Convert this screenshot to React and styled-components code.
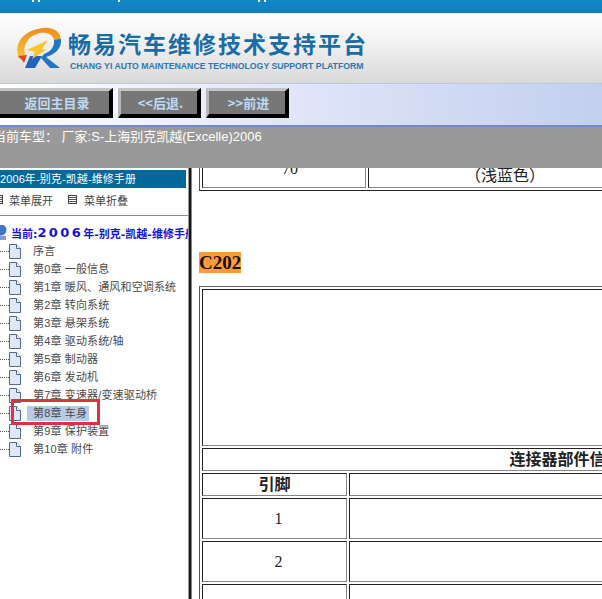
import React from "react";
import styled, { createGlobalStyle } from "styled-components";

const Global = createGlobalStyle`
  html, body { margin: 0; padding: 0; background: #fff; }
  body { font-family: "Liberation Sans", "Noto Sans CJK SC", sans-serif; text-spacing-trim: space-all; }
`;

const Page = styled.div`
  width: 602px;
  height: 599px;
  overflow: hidden;
  display: flex;
  flex-direction: column;
`;

const TopBar = styled.div`
  height: 13px;
  flex: none;
  display: flex;
  align-items: flex-start;
  background: linear-gradient(#1289c8, #127cb9);
`;

const Tick = styled.span`
  width: 2px;
  height: 2px;
  flex: none;
  margin-left: ${(p) => p.$gap}px;
  background: #e8f6ff;
`;

const Header = styled.header`
  height: 70px;
  flex: none;
  display: flex;
  align-items: flex-start;
  padding: 15px 0 0 16px;
  box-sizing: border-box;
  background: linear-gradient(#ffffff, #f4f4f4 35%, #d9d9d9);
`;

const Brand = styled.div`
  margin: 0 0 0 6px;
  display: flex;
  flex-direction: column;
`;

const BrandTitle = styled.div`
  font-family: "Noto Sans CJK SC", sans-serif;
  font-weight: 700;
  font-size: 23px;
  line-height: 30px;
  letter-spacing: 2px;
  color: #1a6ca6;
  white-space: nowrap;
`;

const BrandSub = styled.div`
  font-size: 8.7px;
  font-weight: 700;
  line-height: 11px;
  margin: 3px 0 0 2px;
  color: #2a78b2;
  white-space: nowrap;
`;

const Nav = styled.nav`
  height: 44px;
  flex: none;
  box-sizing: border-box;
  display: flex;
  gap: 5px;
  padding-top: 4px;
  margin-left: -4px;
  background: linear-gradient(90deg, #ffffff, #e0e5f9 50%, #c2cfee);
  border-top: 1px solid #bcc3dc;
  border-bottom: 2px solid #7189cd;
`;

const NavButton = styled.button`
  width: ${(p) => p.$w}px;
  height: 30px;
  box-sizing: border-box;
  border-style: solid;
  border-width: 3px 4px 4px 3px;
  border-color: #c4c4c4 #000 #000 #b8b8b8;
  background: #777;
  color: #bcdaf4;
  font-family: "Noto Sans CJK SC", sans-serif;
  font-size: 13px;
  font-weight: 700;
  padding: 0 0 0 ${(p) => p.$pad || 0}px;
`;

const InfoBar = styled.div`
  height: 41px;
  flex: none;
  box-sizing: border-box;
  background: #999;
  color: #fff;
  font-size: 13px;
  line-height: 18px;
  padding-top: 1px;
  white-space: nowrap;
  overflow: hidden;
`;

const InfoText = styled.div`
  margin-left: -7px;
`;

const Body = styled.div`
  flex: 1;
  min-height: 0;
  display: flex;
`;

const Side = styled.aside`
  position: relative;
  width: 188px;
  flex: none;
  overflow: hidden;
  padding-top: 2px;
  box-sizing: border-box;
`;

const SideTitle = styled.div`
  width: 186px;
  height: 18px;
  background: #03689c;
  color: #fff;
  font-size: 11px;
  letter-spacing: 0.1px;
  line-height: 18px;
  white-space: nowrap;
`;

const ToolRow = styled.div`
  height: 28px;
  box-sizing: border-box;
  padding-bottom: 4px;
  border-bottom: 1px solid #8a8a8a;
  display: flex;
  align-items: center;
  font-size: 11px;
  color: #444;
`;

const ToolIcon = styled.span`
  width: 9px;
  height: 9px;
  flex: none;
  box-sizing: border-box;
  border: 1px solid #444;
  margin-left: ${(p) => p.$ml}px;
  background: repeating-linear-gradient(#fff 0 1px, #555 1px 2px);
`;

const ToolLabel = styled.span`
  margin-left: ${(p) => p.$ml}px;
  white-space: nowrap;
`;

const Current = styled.div`
  display: flex;
  align-items: center;
  height: 19px;
  margin-top: 7px;
  white-space: nowrap;
  font-family: "DejaVu Sans", "Noto Sans CJK SC", sans-serif;
  font-weight: 700;
  font-size: 11px;
  color: #1414d8;
`;

const WideDigits = styled.span`
  font-size: 13px;
  letter-spacing: 2.4px;
`;

const Tree = styled.ul`
  list-style: none;
  margin: 0;
  padding: 0;
`;

const Item = styled.li`
  height: 18px;
  display: flex;
  align-items: center;
  font-size: 11px;
  letter-spacing: 0.15px;
  color: #4a4a4a;
  white-space: nowrap;
`;

const Dots = styled.span`
  width: 9px;
  flex: none;
  border-top: 1px dotted #555;
`;

const ItemLabel = styled.span`
  margin-left: 6px;
  padding: 0 2px 0 6px;
  line-height: 15px;
  background: ${(p) => (p.$on ? "#b9c9e6" : "transparent")};
`;

const Mark = styled.div`
  position: absolute;
  left: 11px;
  top: 231px;
  width: 89px;
  height: 26px;
  box-sizing: border-box;
  border: 3px solid #e2303f;
`;

const Divider = styled.div`
  width: 4px;
  flex: none;
  box-sizing: border-box;
  background: #161616;
  border-left: 1px solid #999;
  border-right: 1px solid #888;
`;

const Content = styled.main`
  flex: 1;
  min-width: 0;
  overflow: hidden;
  padding-left: 7px;
`;

const Table = styled.table`
  width: 733px;
  table-layout: fixed;
  border-collapse: separate;
  border-spacing: 2px;
  border-style: solid;
  border-width: 1px;
  border-color: #666 #222 #222 #555;
  margin: ${(p) => p.$m};
  font-family: "Liberation Serif", "Noto Sans CJK SC", serif;
  color: #222;
`;

const Col = styled.col`
  width: ${(p) => (p.$w ? `${p.$w}px` : "auto")};
`;

const Cell = styled.td`
  box-sizing: border-box;
  height: ${(p) => p.$h}px;
  border-style: solid;
  border-width: 1px;
  border-color: #222 #888 #888 #222;
  padding: ${(p) => p.$pad || 0};
  text-align: center;
  font-size: 16px;
  line-height: 16px;
  font-weight: ${(p) => (p.$b ? 700 : 400)};
  vertical-align: middle;
  white-space: nowrap;
`;

const Tag = styled.div`
  width: fit-content;
  margin-top: 61px;
  height: 21px;
  line-height: 21px;
  background: #fe9a37;
  color: #111;
  font-family: "Liberation Serif", serif;
  font-weight: 700;
  font-size: 19px;
`;

function Logo() {
  return (
    <svg width="46" height="42" viewBox="0 0 46 42" style={{ flex: "none", marginTop: -1 }}>
      <defs>
        <linearGradient id="ring" x1="0" y1="0" x2="0" y2="1">
          <stop offset="0" stopColor="#f28c1c" />
          <stop offset="1" stopColor="#f7c62c" />
        </linearGradient>
      </defs>
      <path d="M3 32C-3 16 8 3 27 1c11-1 18 4 18 13l-7-1c-1-6-8-8-14-7C13 8 6 18 9 28z" fill="url(#ring)" />
      <path d="M45 12c1 10-7 16-15 18l14 11H34L25 31l3-4c6-2 11-7 10-14z" fill="#1d77c4" />
      <path d="M14 29h12l-7 12H9z" fill="#2463bd" />
      <path d="M11 23l21-10-6 9 4 1-14 9 3-7z" fill="#f7c52c" />
      <path d="M2 29l9-1-3 8-2-3z" fill="#e0452a" />
    </svg>
  );
}

function PageIcon() {
  return (
    <svg width="12" height="15" viewBox="0 0 12 15" style={{ flex: "none" }}>
      <path d="M.5.5h7l4 4v10H.5z" fill="#dfe8fa" stroke="#4e6a9a" />
      <path d="M7.5.5v4h4" fill="#fff" stroke="#4e6a9a" />
    </svg>
  );
}

function PcIcon() {
  return (
    <svg width="8" height="15" viewBox="0 0 8 15" style={{ flex: "none", marginRight: 3 }}>
      <circle cx="1" cy="5" r="5.5" fill="#3f74c8" />
      <path d="M-4 11h10v4H-4z" fill="#7f9bd0" />
    </svg>
  );
}

const chapters = [
  "序言",
  "第0章 一般信息",
  "第1章 暖风、通风和空调系统",
  "第2章 转向系统",
  "第3章 悬架系统",
  "第4章 驱动系统/轴",
  "第5章 制动器",
  "第6章 发动机",
  "第7章 变速器/变速驱动桥",
  "第8章 车身",
  "第9章 保护装置",
  "第10章 附件",
];

export default function App() {
  return (
    <Page>
      <Global />
      <TopBar>
        <Tick $gap={32} />
        <Tick $gap={4} />
        <Tick $gap={78} />
        <Tick $gap={138} />
        <Tick $gap={4} />
      </TopBar>
      <Header>
        <Logo />
        <Brand>
          <BrandTitle>畅易汽车维修技术支持平台</BrandTitle>
          <BrandSub>CHANG YI AUTO MAINTENANCE TECHNOLOGY SUPPORT PLATFORM</BrandSub>
        </Brand>
      </Header>
      <Nav>
        <NavButton $w={117} $pad={6}>返回主目录</NavButton>
        <NavButton $w={83} $pad={3}>&lt;&lt;后退.</NavButton>
        <NavButton $w={83} $pad={3}>&gt;&gt;前进</NavButton>
      </Nav>
      <InfoBar>
        <InfoText>当前车型： 厂家:S-上海别克凯越(Excelle)2006</InfoText>
      </InfoBar>
      <Body>
        <Side>
          <SideTitle>2006年-别克-凯越-维修手册</SideTitle>
          <ToolRow>
            <ToolIcon $ml={-6} />
            <ToolLabel $ml={6}>菜单展开</ToolLabel>
            <ToolIcon $ml={15} />
            <ToolLabel $ml={7}>菜单折叠</ToolLabel>
          </ToolRow>
          <Current>
            <PcIcon />
            当前:<WideDigits>2006</WideDigits>年-别克-凯越-维修手册
          </Current>
          <Tree>
            {chapters.map((c) => (
              <Item key={c}>
                <Dots />
                <PageIcon />
                <ItemLabel $on={c.startsWith("第8章")}>{c}</ItemLabel>
              </Item>
            ))}
          </Tree>
          <Mark />
        </Side>
        <Divider />
        <Content>
          <Table $m="-22px 0 0 0">
            <colgroup>
              <Col $w={164} />
              <Col $w={274} />
              <Col />
            </colgroup>
            <tbody>
              <tr>
                <Cell $h={39} $pad="0 0 0 12px">70</Cell>
                <Cell $h={39} $pad="14px 0 0 0">（浅蓝色）</Cell>
                <Cell $h={39} />
              </tr>
            </tbody>
          </Table>
          <Tag>C202</Tag>
          <Table $m="13px 0 0 0">
            <colgroup>
              <Col $w={145} />
              <Col />
            </colgroup>
            <tbody>
              <tr><Cell colSpan={2} $h={157} /></tr>
              <tr><Cell colSpan={2} $h={23} $b>连接器部件信息</Cell></tr>
              <tr>
                <Cell $h={23} $b>引脚</Cell>
                <Cell $h={23} />
              </tr>
              <tr><Cell $h={41} $pad="0 0 0 8px">1</Cell><Cell $h={41} /></tr>
              <tr><Cell $h={41} $pad="0 0 0 8px">2</Cell><Cell $h={41} /></tr>
              <tr><Cell $h={41} $pad="0 0 0 8px">3</Cell><Cell $h={41} /></tr>
            </tbody>
          </Table>
        </Content>
      </Body>
    </Page>
  );
}
